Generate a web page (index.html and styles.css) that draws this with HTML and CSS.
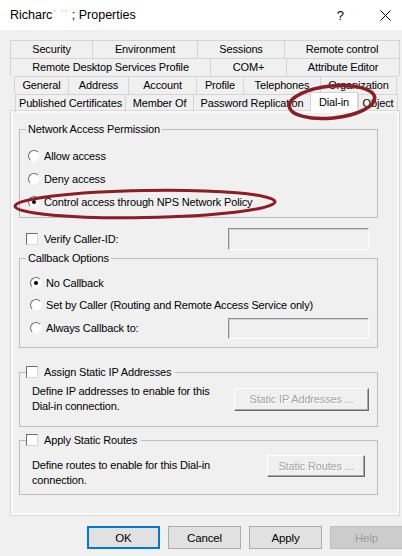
FILE: index.html
```html
<!DOCTYPE html>
<html lang="en">
<head>
    <meta charset="UTF-8">
    <meta name="viewport" content="width=device-width, initial-scale=1.0">
    <title>Properties</title>
    <link rel="stylesheet" href="styles.css">
</head>
<body>
    <div class="titlebar">
        <span class="title">Richarc<span class="smudge">ˈ ˈˈ</span> ; Properties</span>
        <span class="help-mark">?</span>
        <svg class="close" viewBox="0 0 11 11"><path d="M0.5 0.5 L10.5 10.5 M10.5 0.5 L0.5 10.5" stroke="#000" stroke-width="1" fill="none"/></svg>
    </div>

    <div class="tabs">
        <div class="tabrow row-a">
            <div class="tab">Security</div>
            <div class="tab">Environment</div>
            <div class="tab">Sessions</div>
            <div class="tab">Remote control</div>
        </div>
        <div class="tabrow row-b">
            <div class="tab">Remote Desktop Services Profile</div>
            <div class="tab">COM+</div>
            <div class="tab">Attribute Editor</div>
        </div>
        <div class="tabrow row-c">
            <div class="tab">General</div>
            <div class="tab">Address</div>
            <div class="tab">Account</div>
            <div class="tab">Profile</div>
            <div class="tab">Telephones</div>
            <div class="tab">Organization</div>
        </div>
        <div class="tabrow row-d">
            <div class="tab">Published Certificates</div>
            <div class="tab">Member Of</div>
            <div class="tab">Password Replication</div>
            <div class="tab active">Dial-in</div>
            <div class="tab">Object</div>
        </div>
    </div>

    <div class="page">
        <fieldset class="group g-access">
            <legend>Network Access Permission</legend>
            <div class="opt"><span class="radio"></span>Allow access</div>
            <div class="opt"><span class="radio"></span>Deny access</div>
            <div class="opt"><span class="radio on"></span>Control access through NPS Network Policy</div>
        </fieldset>

        <div class="caller">
            <div class="opt"><span class="check"></span>Verify Caller-ID:</div>
            <span class="field"></span>
        </div>

        <fieldset class="group g-callback">
            <legend>Callback Options</legend>
            <div class="opt"><span class="radio on"></span>No Callback</div>
            <div class="opt"><span class="radio"></span>Set by Caller (Routing and Remote Access Service only)</div>
            <div class="opt tall"><span class="radio"></span>Always Callback to:<span class="field"></span></div>
        </fieldset>

        <fieldset class="group g-ip">
            <legend><span class="check"></span>Assign Static IP Addresses</legend>
            <div class="define">
                <p>Define IP addresses to enable for this<br>Dial-in connection.</p>
                <span class="btn-off wide">Static IP Addresses ...</span>
            </div>
        </fieldset>

        <fieldset class="group g-routes">
            <legend><span class="check"></span>Apply Static Routes</legend>
            <div class="define top">
                <p>Define routes to enable for this Dial-in<br>connection.</p>
                <span class="btn-off narrow">Static Routes ...</span>
            </div>
        </fieldset>
    </div>

    <div class="actions">
        <button class="default">OK</button>
        <button>Cancel</button>
        <button>Apply</button>
        <button class="disabled">Help</button>
    </div>

    <!-- red marker rings drawn over the screenshot -->
    <svg class="marks" viewBox="0 0 402 556">
        <ellipse cx="332" cy="102" rx="43" ry="16" transform="rotate(-6 332 102)" fill="none" stroke="#8c1d24" stroke-width="3.5"/>
        <ellipse cx="145" cy="204" rx="130" ry="13.5" transform="rotate(-1 145 204)" fill="none" stroke="#8c1d24" stroke-width="3"/>
    </svg>
</body>
</html>
```

FILE: styles.css
```css
* {
    box-sizing: border-box;
}
body {
    margin: 0;
    width: 402px;
    height: 556px;
    overflow: hidden;
    position: relative;
    background-color: #f0f0f0;
    font-family: "Liberation Sans", Arial, sans-serif;
    font-size: 11px;
    letter-spacing: -0.15px;
    color: #000;
}
.titlebar {
    height: 30px;
    background-color: #fff;
    display: flex;
    align-items: center;
    padding-left: 10px;
    font-size: 12.5px;
    letter-spacing: 0;
}
.title {
    flex: 1;
}
.smudge {
    color: #b8b8b8;
}
.help-mark {
    font-size: 13px;
    margin-right: 36px;
}
.close {
    width: 11px;
    height: 11px;
    margin-right: 11px;
}

/* tab strip */
.tabs {
    padding-top: 10px;
}
.tabrow {
    display: grid;
    height: 18px;
}
.tab {
    display: flex;
    align-items: center;
    justify-content: center;
    white-space: nowrap;
    border-top: 1px solid #d5d5d5;
    border-left: 1px solid #d5d5d5;
    line-height: 17px;
}
.tab:last-child {
    border-right: 1px solid #d5d5d5;
}
.row-a {
    margin: 0 2px 0 10px;
    grid-template-columns: 82px 105px 87px 1fr;
}
.row-b {
    margin: 0 2px 0 10px;
    grid-template-columns: 200px 76px 1fr;
}
.row-c {
    margin: 0 5px 0 14px;
    grid-template-columns: 54px 60px 68px 47px 77px 1fr;
}
.row-d {
    margin: 0 4px 0 15px;
    height: 16px;
    grid-template-columns: 110px 68px 117px 48px 1fr;
}
.tab.active {
    background-color: #fff;
    margin-top: -2px;
    height: 19px;
    border-right: 1px solid #d5d5d5;
    position: relative;
    z-index: 1;
}

/* tab page */
.page {
    margin-left: 10px;
    width: 390px;
    height: 406px;
    border: 1px solid #d9d9d9;
    box-shadow: inset 0 0 0 2px #fafafa;
    padding: 11px 21px 0 8px;
}
.group {
    margin: 0;
    padding: 0 0 0 6px;
    border: 1px solid #bdbdbd;
    min-width: 0;
}
.group legend {
    padding: 0 2px;
    line-height: 14px;
    display: flex;
    align-items: center;
}
.opt {
    display: flex;
    align-items: center;
    gap: 4px;
    height: 23px;
    white-space: nowrap;
}
.g-access {
    padding-top: 8px;
    padding-bottom: 4px;
}
.g-access .opt {
    margin-left: 2px;
}
.g-callback {
    margin-top: 1px;
    padding-top: 7px;
    padding-bottom: 7px;
}
.g-callback .opt {
    margin-left: 4px;
    height: 22px;
}
.g-callback .opt.tall {
    height: 24px;
}
.g-callback .field {
    margin-left: auto;
    margin-right: 8px;
}
.caller {
    margin-top: 10px;
    height: 22px;
    display: flex;
    align-items: center;
    justify-content: space-between;
    padding-left: 7px;
}
.caller .opt {
    gap: 6px;
}
.caller .field {
    margin-right: 9px;
}
.g-ip,
.g-routes {
    padding-left: 6px;
}
.g-ip legend,
.g-routes legend {
    padding: 0 4px 0 0;
    gap: 6px;
}
.g-ip {
    margin-top: 17px;
    padding-top: 5px;
    padding-bottom: 12px;
}
.g-routes {
    margin-top: 6px;
    padding-top: 11px;
    padding-bottom: 6px;
}
.define {
    display: flex;
    align-items: center;
    justify-content: space-between;
    padding-left: 6px;
}
.define.top {
    align-items: flex-start;
}
.define p {
    margin: 0;
    line-height: 15px;
}

/* classic controls */
.radio {
    position: relative;
    flex: none;
    width: 12px;
    height: 12px;
    border-radius: 50%;
    background-color: #fff;
    border: 1px solid;
    border-color: #6a6a6a #f6f6f6 #f6f6f6 #6a6a6a;
}
.radio.on::after {
    content: "";
    position: absolute;
    left: 3px;
    top: 3px;
    width: 4px;
    height: 4px;
    border-radius: 50%;
    background-color: #000;
}
.check {
    flex: none;
    width: 12px;
    height: 12px;
    background-color: #fff;
    border: 1px solid;
    border-color: #6e6e6e #d8d8d8 #d8d8d8 #6e6e6e;
}
.field {
    display: block;
    width: 141px;
    height: 22px;
    background-color: #f0f0f0;
    border: 1px solid;
    border-color: #8c8c8c #fdfdfd #fdfdfd #8c8c8c;
    box-shadow: inset 1px 1px 0 #d4d4d4;
}
.g-callback .field {
    height: 21px;
}
.btn-off {
    display: flex;
    align-items: center;
    justify-content: center;
    height: 23px;
    color: #a3a3a3;
    text-shadow: 1px 1px 0 #fff;
    background-color: #f0f0f0;
    border: 1px solid;
    border-color: #fff #6c6c6c #6c6c6c #fff;
    box-shadow: inset -1px -1px 0 #a8a8a8;
    white-space: nowrap;
}
.btn-off.wide {
    width: 135px;
    margin-right: 8px;
}
.btn-off.narrow {
    width: 98px;
    height: 22px;
    margin-right: 12px;
    margin-top: -3px;
}

/* dialog buttons */
.actions {
    margin-top: 10px;
    margin-right: -1px;
    display: flex;
    justify-content: flex-end;
    gap: 8px;
}
.actions button {
    width: 73px;
    height: 23px;
    padding: 0;
    font-family: inherit;
    font-size: 11.5px;
    letter-spacing: -0.15px;
    color: #000;
    background-color: #e1e1e1;
    border: 1px solid #adadad;
}
.actions button.default {
    border: 2px solid #0078d7;
}
.actions button.disabled {
    background-color: #cccccc;
    border-color: #bfbfbf;
    color: #9c9c9c;
}

.marks {
    position: absolute;
    left: 0;
    top: 0;
    width: 402px;
    height: 556px;
    pointer-events: none;
}
```
